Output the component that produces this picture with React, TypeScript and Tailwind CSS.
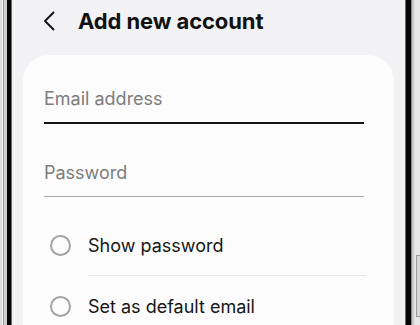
import React from "react";

function Radio() {
  return <span className="block w-[21px] h-[21px] rounded-full border-2 border-[#a3a3a3] shrink-0" />;
}

export default function App() {
  return (
    <div className="flex w-[420px] h-[325px] overflow-hidden bg-[#f2f2f4]" style={{ fontFamily: "Inter, Roboto, sans-serif" }}>
      {/* left frame */}
      <div className="flex shrink-0">
        <div className="w-[2px] bg-[#dcdcdc]" />
        <div className="w-[1px] bg-[#f4f4f4]" />
        <div className="w-[1px] bg-[#9a9a9a]" />
        <div className="w-[3px] bg-[#cfcfcf]" />
        <div className="w-[4px] bg-[#050505]" />
        <div className="w-[1px] bg-[#6b6b6b]" />
      </div>

      {/* screen */}
      <div className="flex-1 flex flex-col bg-[#f2f2f4]">
        <div className="flex items-center h-[42px] pl-[31px] pb-[1px]">
          <svg width="12" height="20" viewBox="0 0 12 20" className="shrink-0">
            <path d="M10.5 1.5 L2 10 L10.5 18.5" fill="none" stroke="#111" strokeWidth="1.9" strokeLinecap="round" strokeLinejoin="round" />
          </svg>
          <h1 className="ml-[23px] text-[22px] font-bold text-[#111] tracking-[-0.1px] leading-none">Add new account</h1>
        </div>

        <div className="mx-[11px] mt-[13px] flex-1 bg-[#fcfcfc] rounded-t-[26px] pt-[33px] px-[21px]">
          <div className="pr-[9px]">
            <div className="text-[18px] leading-[22px] text-[#7d7d7d]">Email address</div>
            <div className="mt-[12px] h-[2px] bg-[#141414]" />
            <div className="mt-[38px] text-[18px] leading-[22px] text-[#7d7d7d]">Password</div>
            <div className="mt-[12px] h-px bg-[#a9a9a9]" />
          </div>

          <div className="mt-[36px] flex flex-col">
            <div className="flex items-center gap-[17px] h-[24px] pl-[6px]">
              <Radio />
              <span className="text-[18px] text-[#161616]">Show password</span>
            </div>
            <div className="ml-[44px] mr-[7px] mt-[18px] h-px bg-[#e3e3e3]" />
            <div className="flex items-center gap-[17px] h-[24px] pl-[6px] mt-[18px]">
              <Radio />
              <span className="text-[18px] text-[#161616]">Set as default email</span>
            </div>
          </div>
        </div>
      </div>

      {/* right frame */}
      <div className="flex shrink-0">
        <div className="w-[1px] bg-[#6b6b6b]" />
        <div className="w-[5px] bg-[#050505]" />
        <div className="w-[1px] bg-[#8c8c8c]" />
        <div className="w-[2px] bg-[#c9c9c9]" />
        <div className="relative w-[6px] bg-[#e6e6e6]">
          <div className="absolute left-[2px] top-[255px] w-[4px] h-[62px] border-l border-y border-[#9a9a9a] bg-[#d8d8d8]" />
        </div>
      </div>
    </div>
  );
}
